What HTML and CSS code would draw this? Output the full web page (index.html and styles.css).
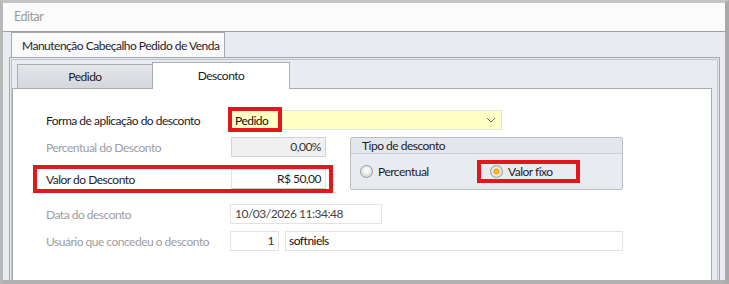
FILE: index.html
```html
<!DOCTYPE html>
<html lang="pt-BR">

<head>
    <meta charset="UTF-8">
    <title>Editar</title>
    <link rel="stylesheet" href="styles.css">
</head>

<body>
    <div class="window">
        <div class="titlebar">Editar</div>
        <div class="panel">
            <div class="outer_tabs">
                <div class="outer_tab">Manutenção Cabeçalho Pedido de Venda</div>
            </div>
            <div class="frame">
                <div class="frame_inner">
                    <div class="tabs">
                        <div class="tab">Pedido</div>
                        <div class="tab active">Desconto</div>
                    </div>
                    <div class="page">
                        <div class="row first">
                            <span class="label">Forma de aplicação do desconto</span>
                            <div class="select">
                                <span class="mark_pedido"></span>
                                <span class="select_text">Pedido</span>
                                <svg class="chevron" width="10" height="6" viewBox="0 0 10 6">
                                    <path d="M1 1 L5 5 L9 1" fill="none" stroke="#6b6b6b" stroke-width="1"/>
                                </svg>
                            </div>
                        </div>

                        <div class="middle">
                            <div class="left_col">
                                <div class="row">
                                    <span class="label muted">Percentual do Desconto</span>
                                    <div class="input num disabled">0,00%</div>
                                </div>
                                <div class="row marked">
                                    <span class="label">Valor do Desconto</span>
                                    <div class="input num value">R$ 50,00</div>
                                </div>
                            </div>

                            <div class="group">
                                <div class="group_title">Tipo de desconto</div>
                                <div class="group_body">
                                    <div class="radio_item first_radio">
                                        <span class="radio"></span>
                                        <span>Percentual</span>
                                    </div>
                                    <div class="radio_item marked_radio">
                                        <span class="radio checked"></span>
                                        <span>Valor fixo</span>
                                    </div>
                                </div>
                            </div>
                        </div>

                        <div class="row date_row">
                            <span class="label muted">Data do desconto</span>
                            <div class="input date">10/03/2026 11:34:48</div>
                        </div>

                        <div class="row user_row">
                            <span class="label muted">Usuário que concedeu o desconto</span>
                            <div class="input user_id">1</div>
                            <div class="input user_name">softniels</div>
                        </div>
                    </div>
                </div>
            </div>
        </div>
    </div>
</body>

</html>
```

FILE: styles.css
```css
* {
    margin: 0;
    padding: 0;
    box-sizing: border-box;
}

body {
    width: 729px;
    height: 284px;
    overflow: hidden;
    font-family: Lato, "Noto Sans", sans-serif;
    font-size: 12px;
    letter-spacing: -0.5px;
    color: #1c1c28;
    white-space: nowrap;
}

.window {
    width: 729px;
    height: 284px;
    overflow: hidden;
    border-top: 3px solid #c4c4c4;
    border-left: 3px solid #b8b8b8;
    border-right: 4px solid #a9a9a9;
    border-bottom: 4px solid #b1b1b1;
    background: #e8ebf0;
}

.titlebar {
    height: 29px;
    padding-left: 11px;
    line-height: 28px;
    color: #9b9b9b;
    font-size: 12.5px;
    background: #fbfbfb;
    border-bottom: 1px solid #a0a0a0;
}

.outer_tabs {
    height: 25px;
    padding-left: 8px;
    display: flex;
}

.outer_tab {
    width: 214px;
    height: 25px;
    padding-left: 10px;
    line-height: 25px;
    background: #fafafa;
    border: 1px solid #a7abb0;
    border-bottom: none;
    color: #23232f;
}

.frame {
    height: 230px;
    margin-left: 6px;
    margin-right: 5px;
    padding: 1px;
    border: 1px solid #a3a7ad;
    border-bottom: none;
}

.frame_inner {
    height: 100%;
    border: 1px solid #bfc3c8;
    border-bottom: none;
}

.tabs {
    height: 28px;
    padding-left: 5px;
    display: flex;
    align-items: flex-end;
}

.tab {
    width: 135px;
    height: 24px;
    text-align: center;
    line-height: 23px;
    background: linear-gradient(#e4e6ea, #d4d7dc);
    border: 1px solid #a9adb3;
    border-right: none;
    border-bottom: none;
}

.tab.active {
    width: 138px;
    height: 27px;
    margin-bottom: -1px;
    line-height: 25px;
    background: #fff;
    border-right: 1px solid #a9adb3;
    position: relative;
    z-index: 1;
}

.page {
    height: 200px;
    margin-right: 5px;
    padding: 0 0 0 33px;
    background: #fff;
    border: 1px solid #a9adb3;
    border-bottom: none;
}

.row {
    display: flex;
    align-items: center;
    height: 20px;
}

.row.first {
    margin-top: 21px;
}

.label {
    width: 184px;
    flex-shrink: 0;
}

.label.muted {
    color: #9d9da3;
}

.select {
    width: 272px;
    height: 20px;
    display: flex;
    align-items: center;
    padding-left: 4px;
    background: #ffffc6;
    border: 1px solid #e6e6e0;
    position: relative;
}

.select_text {
    flex: 1;
    color: #111;
}

.chevron {
    margin-right: 5px;
}

.mark_pedido {
    position: absolute;
    left: -3px;
    top: -4px;
    width: 54px;
    height: 25px;
    border: 4px solid #e3161c;
}

.input {
    height: 20px;
    padding: 0 4px;
    line-height: 18px;
    border: 1px solid #e2e2e2;
    background: #fff;
    color: #333;
}

.input.num {
    width: 95px;
    margin-left: 1px;
    text-align: right;
}

.input.disabled {
    height: 20px;
    background: #f0f0f0;
    border-color: #d4d4d4;
}

.input.value {
    color: #1c1c28;
    border-bottom-color: #c6c6c6;
}

.middle {
    display: flex;
    margin-top: 7px;
}

.left_col {
    width: 287px;
}

.row.marked {
    width: 300px;
    height: 28px;
    margin-top: 8px;
    margin-left: -13px;
    padding-left: 9px;
    border: 4px solid #e3161c;
}

.group {
    width: 273px;
    height: 53px;
    margin-left: 17px;
    border: 1px solid #babec4;
    border-radius: 2px;
    background: #e8ebf0;
}

.group_title {
    height: 16px;
    padding-left: 11px;
    line-height: 15px;
    background: #e3e6eb;
    border-bottom: 1px solid #c9ccd1;
}

.group_body {
    height: 35px;
    display: flex;
    align-items: center;
}

.radio_item {
    display: flex;
    align-items: center;
    gap: 5px;
}

.first_radio {
    width: 126px;
    padding-left: 9px;
}

.marked_radio {
    width: 103px;
    height: 23px;
    padding-left: 9px;
    border: 4px solid #e3161c;
}

.radio {
    width: 13px;
    height: 13px;
    border-radius: 50%;
    border: 1px solid #9c9c9c;
    background: radial-gradient(circle at 50% 40%, #fafafa 20%, #d8d8d8 75%);
}

.radio.checked {
    background: radial-gradient(circle, #ffd230 0, #f2a100 2.5px, #ececec 3.5px, #d6d6d6 6px);
}

.row.date_row {
    margin-top: 11px;
}

.input.date {
    width: 152px;
    color: #444;
}

.row.user_row {
    margin-top: 7px;
}

.input.user_id {
    width: 49px;
    text-align: right;
}

.input.user_name {
    width: 338px;
    margin-left: 6px;
    padding-left: 3px;
    color: #111;
}
```
